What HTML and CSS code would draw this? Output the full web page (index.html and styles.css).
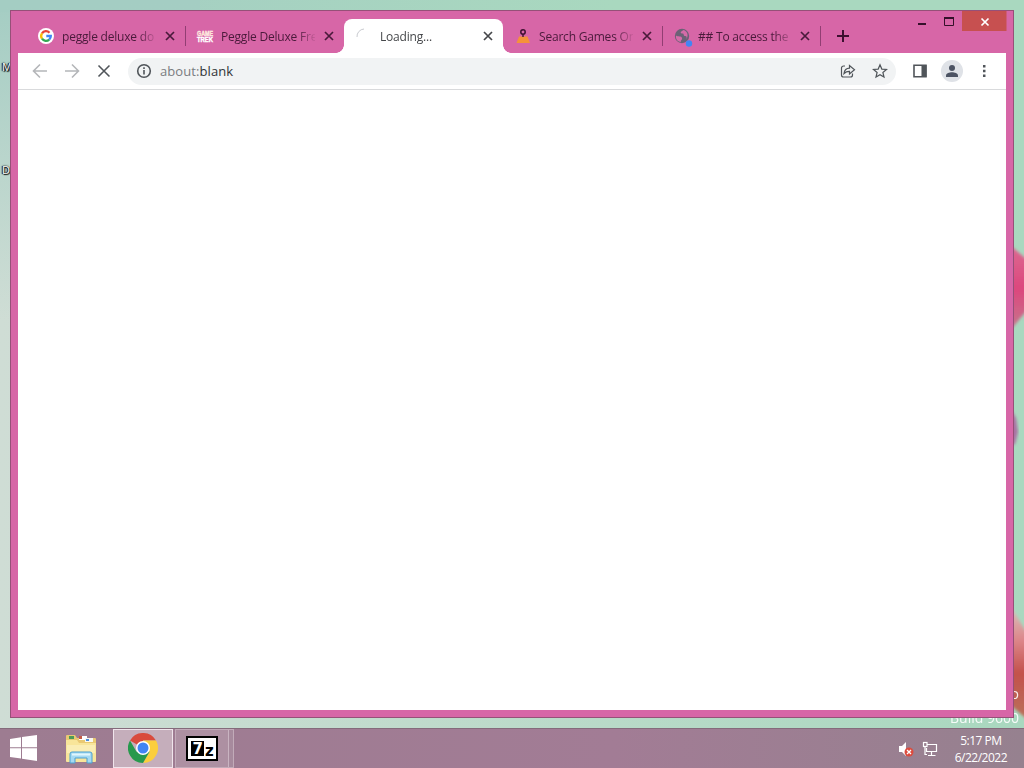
FILE: index.html
```html
<!DOCTYPE html>
<html lang="en">
<head>
    <meta charset="utf-8">
    <title>about:blank</title>
    <link rel="stylesheet" href="styles.css">
</head>
<body>
    <div class="desktop">
        <svg class="wallpaper" width="1024" height="768">
            <defs>
                <linearGradient id="petal" x1="0" y1="0" x2="0" y2="1">
                    <stop offset="0" stop-color="#dd6d93"/>
                    <stop offset=".5" stop-color="#dc477d"/>
                    <stop offset="1" stop-color="#c18090"/>
                </linearGradient>
                <linearGradient id="stem" x1="0" y1="0" x2="0" y2="1">
                    <stop offset="0" stop-color="#d9d5cf"/>
                    <stop offset=".35" stop-color="#dc8589"/>
                    <stop offset=".6" stop-color="#c3514b"/>
                    <stop offset="1" stop-color="#b8755b"/>
                </linearGradient>
                <filter id="soft"><feGaussianBlur stdDeviation="1.5"/></filter>
            </defs>
            <path d="M1004 240L1032 264V304L1004 338Z" fill="url(#petal)" filter="url(#soft)"/>
            <path d="M1010 408l6 10 2 14-3 12-5 2z" fill="#aa71a3" filter="url(#soft)"/>
            <path d="M1004 595L1034 645V725L1004 700Z" fill="url(#stem)" filter="url(#soft)"/>
        </svg>
        <span class="shortcut shortcut-m">M</span>
        <span class="shortcut shortcut-d">D</span>
        <div class="watermark">Windows 8.1 Pro<br>Build 9600</div>

        <div class="window">
            <div class="tab-strip">
                <div class="tab">
                    <svg class="favicon" viewBox="0 0 16 16">
                        <circle cx="8" cy="8" r="8" fill="#fff"/>
                        <g fill="none" stroke-width="2.3">
                            <path d="M4 5.3A4.8 4.8 0 0 1 11.5 4.7" stroke="#ea4335"/>
                            <path d="M4 5.3A4.8 4.8 0 0 0 4 10.7" stroke="#fbbc05"/>
                            <path d="M4 10.7A4.8 4.8 0 0 0 11.2 11.6" stroke="#34a853"/>
                            <path d="M11.2 11.6A4.8 4.8 0 0 0 12.8 8H8.3" stroke="#4285f4"/>
                        </g>
                    </svg>
                    <span class="title">peggle deluxe do</span>
                    <svg class="close" viewBox="0 0 10 10"><path d="M1 1l8 8M9 1l-8 8"/></svg>
                </div>
                <div class="tab">
                    <svg class="favicon" viewBox="0 0 16 16">
                        <text x="0" y="7.5" textLength="16" lengthAdjust="spacingAndGlyphs" class="game">GAME</text>
                        <text x="0" y="13.5" textLength="16" lengthAdjust="spacingAndGlyphs" class="game trek">TREK</text>
                    </svg>
                    <span class="title">Peggle Deluxe Fre</span>
                    <svg class="close" viewBox="0 0 10 10"><path d="M1 1l8 8M9 1l-8 8"/></svg>
                </div>
                <div class="tab active">
                    <svg class="favicon" viewBox="0 0 16 16"><path d="M1 9A7.5 7.5 0 0 1 8 1" fill="none" stroke="#c9cbd0"/></svg>
                    <span class="title">Loading...</span>
                    <svg class="close" viewBox="0 0 10 10"><path d="M1 1l8 8M9 1l-8 8"/></svg>
                </div>
                <div class="tab">
                    <svg class="favicon" viewBox="0 0 16 16">
                        <path d="M1.5 15L4 8.5H12.5L15 15Z" fill="#f5923a"/>
                        <path d="M8 6.5V9" stroke="#3d1030" stroke-width="1.4"/>
                        <circle cx="8" cy="4" r="2.2" fill="none" stroke="#3d1030" stroke-width="1.5"/>
                    </svg>
                    <span class="title">Search Games On</span>
                    <svg class="close" viewBox="0 0 10 10"><path d="M1 1l8 8M9 1l-8 8"/></svg>
                </div>
                <div class="tab last">
                    <svg class="favicon" viewBox="0 0 16 16">
                        <circle cx="8" cy="8" r="7.2" fill="#6b6176"/>
                        <path d="M2 7.5C4 9 7.5 7.5 8 10S6 12 7 14.2C3.5 13.5 1.5 11 2 7.5ZM8 3C6 4 6.5 5.5 8.5 5.5S9 8 11 8s2.2 2 1 3.6C15 8 13.5 3 9.5 2Z" fill="#d56ba8"/>
                        <circle cx="15" cy="15.5" r="3.2" fill="#4285f4"/>
                    </svg>
                    <span class="title">## To access the</span>
                    <svg class="close" viewBox="0 0 10 10"><path d="M1 1l8 8M9 1l-8 8"/></svg>
                </div>
                <svg class="new-tab" viewBox="0 0 12 12"><path d="M6 0v12M0 6h12"/></svg>
                <div class="controls">
                    <svg width="108" height="22" viewBox="0 0 108 22">
                        <rect x="62" width="44.5" height="20" fill="#c75050"/>
                        <path d="M18 13h8" stroke="#35102a" stroke-width="2"/>
                        <path d="M44.5 7v7.5h9V7" fill="none" stroke="#35102a"/>
                        <path d="M44 7h10" stroke="#35102a" stroke-width="2"/>
                        <path d="M81.5 7.5l7 7M88.5 7.5l-7 7" stroke="#fff" stroke-width="1.7"/>
                    </svg>
                </div>
            </div>

            <div class="page">
                <div class="toolbar">
                    <svg class="icon muted" viewBox="0 0 16 16"><path d="M15 8H2M8 1.5L1.5 8 8 14.5"/></svg>
                    <svg class="icon muted" viewBox="0 0 16 16"><path d="M1 8h13M8 1.5L14.5 8 8 14.5"/></svg>
                    <svg class="icon" viewBox="0 0 16 16"><path d="M2.5 2.5l11 11M13.5 2.5l-11 11"/></svg>
                    <div class="address">
                        <svg class="icon" viewBox="0 0 16 16">
                            <circle cx="8" cy="8" r="6.3"/><path d="M8 7v4.5M8 4.3v1.6"/>
                        </svg>
                        <span class="url">about:<b>blank</b></span>
                        <svg class="icon thin" viewBox="0 0 16 16">
                            <path d="M5 3H3.5a2 2 0 0 0-2 2v7a2 2 0 0 0 2 2h7a2 2 0 0 0 2-2v-1.5"/>
                            <path d="M4 10.5C4.5 7 6.5 5.3 9.5 5.2V2.5L14.5 6.8 9.5 11V8.3C7 8.2 5.5 9 4 10.5Z"/>
                        </svg>
                        <svg class="icon thin" viewBox="0 0 16 16"><path d="M8 1.8l1.8 4.3 4.7.4-3.6 3 1.1 4.6L8 11.7l-4 2.4 1.1-4.6-3.6-3 4.7-.4Z"/></svg>
                    </div>
                    <svg class="icon" viewBox="0 0 16 16"><path d="M2 2.2h12v11.6H2Z"/><path d="M9.5 2h5v12h-5Z" fill="#50555a" stroke="none"/></svg>
                    <div class="avatar">
                        <svg viewBox="0 0 14 14"><circle cx="7" cy="4" r="3" fill="#4c5363"/><path d="M1 13v-1.5C1 9 4.5 8.2 7 8.2s6 .8 6 3.3V13Z" fill="#4c5363"/></svg>
                    </div>
                    <svg class="icon" viewBox="0 0 16 16"><path d="M7 2h2.500v2.500H7zM7 6.800h2.500v2.500H7zM7 11.600h2.500v2.500H7z" fill="#50555a" stroke="none"/></svg>
                </div>
            </div>
        </div>

        <div class="taskbar">
            <div class="start">
                <svg width="27" height="26" viewBox="0 0 27 26" fill="#fff"><path d="M0 4L11 2.3V12.3H0ZM12 2.1L27 0V12.3H12ZM0 13.3H11V23.5L0 22ZM12 13.3H27V26L12 23.7Z"/></svg>
            </div>
            <div class="task">
                <svg width="32" height="30" viewBox="0 0 32 30">
                    <path d="M1 2q0-1 1-1h8l2 3h18q1 0 1 1v22H1Z" fill="#e9c973"/>
                    <path d="M4 2h5v3H4z" fill="#4c9b57"/><path d="M14 2h8v4h-8z" fill="#fff"/><path d="M14 2h3v3h-3z" fill="#c65a45"/><path d="M20 4h8v4h-8z" fill="#f8f8f2"/><path d="M21 5h3v2h-3z" fill="#4c8edb"/>
                    <path d="M1 6h11l2 3h17v18q0 1-1 1H2q-1 0-1-1Z" fill="#f8e59a"/>
                    <path d="M2 11h28v8H2z" fill="#faedb5"/>
                    <path d="M5 29V20q0-2 2-2h18q2 0 2 2v9h-5v-5H10v5Z" fill="#a5daf2" stroke="#4b9fd0"/>
                    <path d="M7 20.500h18" stroke="#e0f6fd" stroke-width="2"/>
                </svg>
            </div>
            <div class="task current">
                <svg width="30" height="30" viewBox="0 0 30 30">
                    <path d="M15 15L2 7.5A15 15 0 0 1 28 7.5H15Z" fill="#d94b3d"/>
                    <path d="M15 15L15 7.5H28A15 15 0 0 1 15 30L21.5 18.7Z" fill="#fbce3c"/>
                    <path d="M2 7.5A15 15 0 0 0 15 30L21.5 18.7 15 15 8.5 18.7Z" fill="#27994d"/>
                    <circle cx="15" cy="15" r="7" fill="#fff"/><circle cx="15" cy="15" r="5.5" fill="#4285f4"/>
                </svg>
            </div>
            <div class="task stacked">
                <svg width="32" height="25" viewBox="0 0 32 25">
                    <rect width="32" height="25" fill="#000"/><rect x="2" y="2" width="28" height="21" fill="#fff"/>
                    <rect x="5" y="5" width="13" height="15" fill="#000"/>
                    <text x="6.5" y="18" class="seven">7</text><text x="19" y="20" class="zed">z</text>
                </svg>
            </div>
            <div class="tray">
                <svg width="16" height="16" viewBox="0 0 16 16">
                    <path d="M1 5h3v6H1zM4 5l4-4v14l-4-4" fill="#fff"/>
                    <circle cx="11" cy="11" r="4.5" fill="#dc4b3e"/><path d="M9 9l4 4M13 9l-4 4" stroke="#fff" stroke-width="1.3"/>
                </svg>
                <svg width="16" height="16" viewBox="0 0 16 16" fill="none" stroke="#fff" stroke-width="1.2">
                    <path d="M5 3.5h9.500v7H4.500V7M9.500 11v3M6 14.500h7.500"/><rect x="1.500" y="1.500" width="3.500" height="4"/><path d="M3 6v7.500h2"/>
                </svg>
                <div class="clock"><span>5:17 PM</span><span>6/22/2022</span></div>
            </div>
        </div>
    </div>
</body>
</html>
```

FILE: styles.css
```css
body {
    margin: 0;
    font-family: "Open Sans", "Noto Sans", sans-serif;
    font-size: 12px;
}

.desktop {
    position: relative;
    display: flex;
    flex-direction: column;
    width: 1024px;
    height: 768px;
    overflow: hidden;
    background: linear-gradient(#a4cdc3, rgba(164, 205, 195, 0) 320px) 0 0 / 200px 100% no-repeat, linear-gradient(90deg, #a4cdc3, #a9d8bf 60%) 0 0 / 100% 12px no-repeat, linear-gradient(90deg, #cfddd5, #a9d8bf);
}

.wallpaper {
    position: absolute;
    left: 0;
    top: 0;
}

.shortcut {
    position: absolute;
    left: 2px;
    color: #fff;
    font-size: 11px;
    text-shadow: 1px 1px 1px #000, -1px 0 1px #000, 0 0 2px #000;
}

.shortcut-m { top: 59px; }
.shortcut-d { top: 162px; }

.watermark {
    position: absolute;
    right: 5px;
    top: 682px;
    color: #fff;
    font-size: 14px;
    line-height: 24px;
    text-align: right;
    opacity: .9;
}

/* browser window */
.window {
    position: relative;
    box-sizing: border-box;
    width: 1004px;
    height: 708px;
    margin: 10px 0 0 10px;
    padding: 0 7px 7px;
    border: 1px solid #965078;
    background: #d766a7;
}

.tab-strip {
    display: flex;
    height: 34px;
    margin-top: 8px;
    padding-left: 8px;
}

.tab {
    position: relative;
    box-sizing: border-box;
    display: flex;
    align-items: center;
    width: 159px;
    padding: 0 10px 0 12px;
    color: #4a1a3b;
}

.tab.last {
    width: 158px;
}

.tab:first-child::after,
.tab:nth-child(4)::after,
.tab.last::after {
    content: "";
    position: absolute;
    right: -1px;
    top: 7px;
    width: 1px;
    height: 20px;
    background: #923e73;
}

.tab.active {
    background: #fff;
    border-radius: 8px 8px 0 0;
    color: #45474a;
}

.tab.active::before,
.tab.active::after {
    content: "";
    position: absolute;
    bottom: 0;
    width: 8px;
    height: 8px;
}

.tab.active::before {
    left: -8px;
    background: radial-gradient(circle at 0 0, transparent 7.5px, #fff 8px);
}

.tab.active::after {
    right: -8px;
    background: radial-gradient(circle at 100% 0, transparent 7.5px, #fff 8px);
}

.favicon {
    width: 16px;
    height: 16px;
    margin-right: 8px;
    overflow: visible;
}

.game {
    font: 900 7px "Liberation Sans", sans-serif;
    fill: #ffc9a4;
    stroke: #fff;
    stroke-width: .4px;
}

.trek {
    fill: #fff;
}

.title {
    width: 94px;
    letter-spacing: -.2px;
    white-space: nowrap;
    -webkit-mask-image: linear-gradient(90deg, #000 76px, transparent 96px);
    mask-image: linear-gradient(90deg, #000 76px, transparent 96px);
}

.close {
    width: 10px;
    height: 10px;
    margin-left: auto;
    stroke: currentColor;
    stroke-width: 1.7;
}

.new-tab {
    width: 12px;
    height: 12px;
    margin: 11px 0 0 17px;
    stroke: #3d1030;
    stroke-width: 2;
}

.controls {
    margin: -8px -1px 0 auto;
}

.controls svg {
    margin-right: -1px;
}

.page {
    height: 657px;
    background: #fff;
}

.toolbar {
    box-sizing: border-box;
    display: flex;
    align-items: center;
    height: 37px;
    padding: 0 14px;
    border-bottom: 1px solid #d9dadc;
}

.icon {
    width: 16px;
    height: 16px;
    margin-right: 16px;
    fill: none;
    stroke: #50555a;
    stroke-width: 1.6;
}

.icon.muted {
    stroke: #b4b6b9;
}

.icon.thin {
    stroke-width: 1.2;
}

.toolbar > .icon:last-child {
    margin-right: 0;
}

.address {
    display: flex;
    align-items: center;
    box-sizing: border-box;
    width: 770px;
    height: 27px;
    margin-right: 16px;
    padding-left: 8px;
    border-radius: 14px;
    background: #f1f3f4;
}

.address .icon {
    margin-right: 8px;
}

.address .thin {
    margin-left: 8px;
}

.url {
    flex: 1;
    color: #797c80;
    font-size: 13px;
    letter-spacing: .1px;
}

.url b {
    color: #303236;
    font-weight: normal;
}

.avatar {
    display: flex;
    align-items: center;
    justify-content: center;
    width: 22px;
    height: 22px;
    margin: 0 13px 0 -3px;
    border-radius: 50%;
    background: #dfe2e7;
}

.avatar svg {
    width: 14px;
    height: 14px;
}

/* taskbar */
.taskbar {
    position: relative;
    display: flex;
    box-sizing: border-box;
    height: 40px;
    margin-top: auto;
    border-top: 1px solid #846b7b;
    background: linear-gradient(90deg, #9d7c91, #a27c95 60%, #96818f);
}

.start {
    display: flex;
    align-items: center;
    width: 40px;
    padding: 0 1px 2px 10px;
}

.task {
    box-sizing: border-box;
    display: flex;
    align-items: center;
    justify-content: center;
    width: 60px;
}

.task.current {
    margin-left: 2px;
    padding-bottom: 2px;
    border: 1px solid #f0e5ec;
    background: #c5aebb;
}

.task.stacked {
    width: 59px;
    margin-left: 2px;
    padding-right: 6px;
    border: 1px solid #c2abb9;
    background: #ad90a2;
    box-shadow: inset -4px 0 #a78a9d, inset -5px 0 #c9b4c1;
}

.seven,
.zed {
    font: bold 15px "DejaVu Sans", sans-serif;
    fill: #fff;
}

.zed {
    fill: #000;
}

.tray {
    display: flex;
    align-items: center;
    gap: 8px;
    margin-left: auto;
    padding-right: 17px;
}

.clock {
    display: flex;
    flex-direction: column;
    align-items: center;
    margin-left: 9px;
    color: #fff;
    font-size: 12px;
    line-height: 17px;
    letter-spacing: -.5px;
}
```
